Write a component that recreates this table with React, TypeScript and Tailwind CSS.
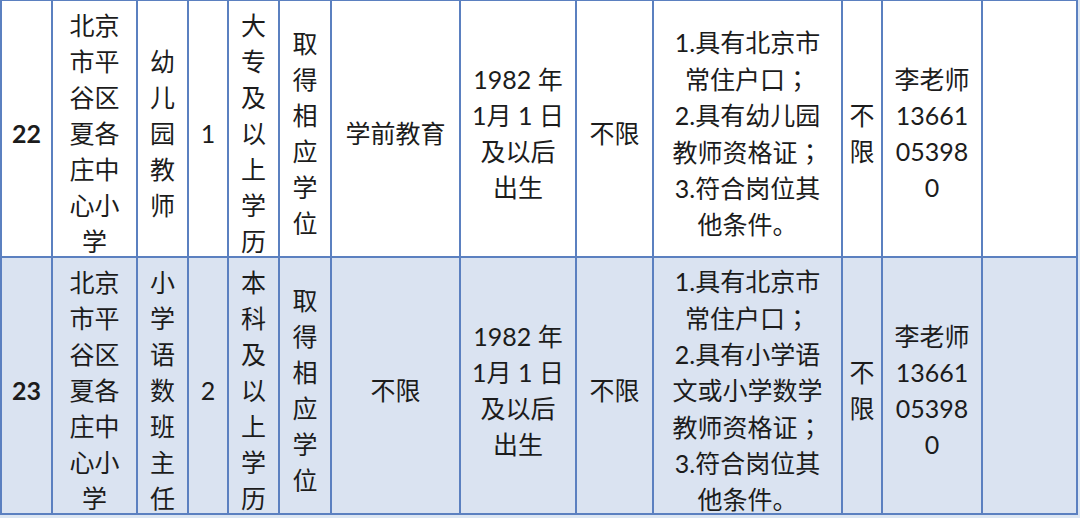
import React from "react";

type Row = {
  no: string;
  school: string[];
  post: string[];
  count: string;
  edu: string[];
  degree: string[];
  major: string[];
  birth: string[];
  title: string[];
  req: string[];
  other: string[];
  contact: string[];
  bg: string;
};

const rows: Row[] = [
  {
    no: "22",
    school: ["北京", "市平", "谷区", "夏各", "庄中", "心小", "学"],
    post: ["幼", "儿", "园", "教", "师"],
    count: "1",
    edu: ["大", "专", "及", "以", "上", "学", "历"],
    degree: ["取", "得", "相", "应", "学", "位"],
    major: ["学前教育"],
    birth: ["1982 年", "1月 1 日", "及以后", "出生"],
    title: ["不限"],
    req: ["1.具有北京市", "常住户口；", "2.具有幼儿园", "教师资格证；", "3.符合岗位其", "他条件。"],
    other: ["不", "限"],
    contact: ["李老师", "13661", "05398", "0"],
    bg: "bg-white",
  },
  {
    no: "23",
    school: ["北京", "市平", "谷区", "夏各", "庄中", "心小", "学"],
    post: ["小", "学", "语", "数", "班", "主", "任"],
    count: "2",
    edu: ["本", "科", "及", "以", "上", "学", "历"],
    degree: ["取", "得", "相", "应", "学", "位"],
    major: ["不限"],
    birth: ["1982 年", "1月 1 日", "及以后", "出生"],
    title: ["不限"],
    req: ["1.具有北京市", "常住户口；", "2.具有小学语", "文或小学数学", "教师资格证；", "3.符合岗位其", "他条件。"],
    other: ["不", "限"],
    contact: ["李老师", "13661", "05398", "0"],
    bg: "bg-[#dae3f1]",
  },
];

const widths = [51, 85, 51, 40, 51, 52, 129, 116, 77, 189, 40, 100, 95];

// full-width semicolon sits centred in the reference, as in the TC face
function Line({ text }: { text: string }) {
  if (text.endsWith("；")) {
    return (
      <div className="whitespace-nowrap">
        {text.slice(0, -1)}
        <span className="font-['Noto_Sans_CJK_TC',sans-serif]">；</span>
      </div>
    );
  }
  return <div className="whitespace-nowrap">{text}</div>;
}

function Cell({ lines, bold }: { lines: string[]; bold?: boolean }) {
  return (
    <td className="border-2 border-[#5b80c0] p-0 text-center align-middle">
      <div className={`h-[255px] flex flex-col items-center justify-center pt-[9px] ${bold ? "font-bold" : ""}`}>
        {lines.map((l, i) => (
          <Line key={i} text={l} />
        ))}
      </div>
    </td>
  );
}

export default function App() {
  return (
    <div className="w-[1080px] h-[518px] overflow-hidden bg-[#dce6f2] font-['Lato','Noto_Sans_CJK_SC',sans-serif] text-[25px] leading-[36px] text-[#1c1c1c]">
      <table className="table-fixed border-collapse w-[1078px] -mt-[1px]">
        <colgroup>
          {widths.map((w, i) => (
            <col key={i} style={{ width: w }} />
          ))}
        </colgroup>
        <tbody>
          {rows.map((r) => (
            <tr key={r.no} className={r.bg}>
              <Cell lines={[r.no]} bold />
              <Cell lines={r.school} />
              <Cell lines={r.post} />
              <Cell lines={[r.count]} />
              <Cell lines={r.edu} />
              <Cell lines={r.degree} />
              <Cell lines={r.major} />
              <Cell lines={r.birth} />
              <Cell lines={r.title} />
              <Cell lines={r.req} />
              <Cell lines={r.other} />
              <Cell lines={r.contact} />
              <Cell lines={[]} />
            </tr>
          ))}
        </tbody>
      </table>
    </div>
  );
}
